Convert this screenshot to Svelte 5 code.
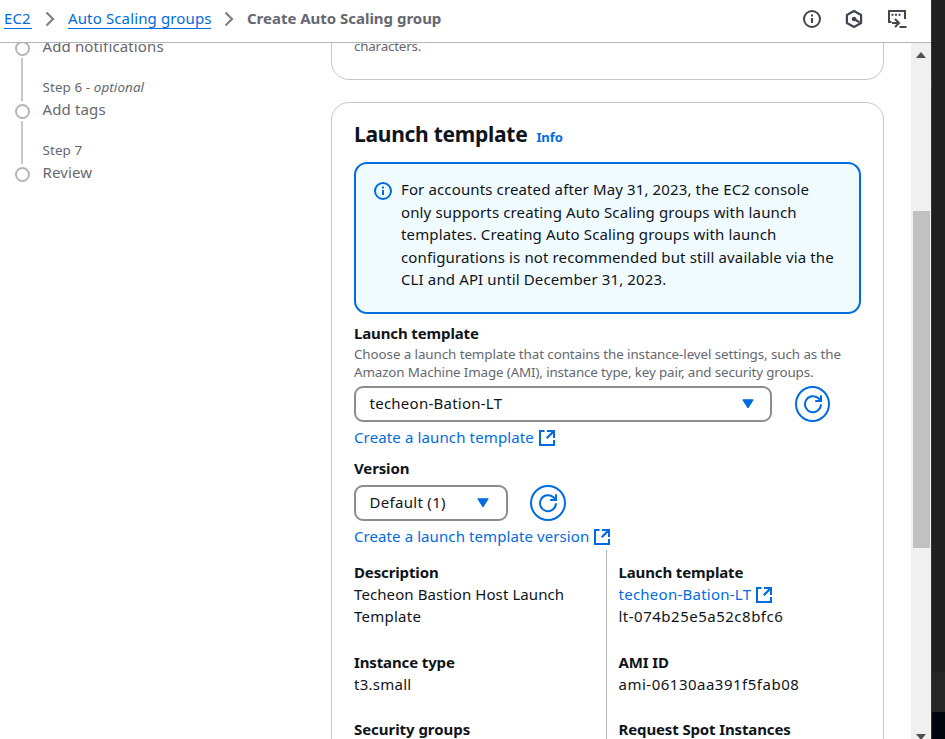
<script>
  const steps = [
    { step: '', optional: false, title: 'Add notifications' },
    { step: 'Step 6', optional: true, title: 'Add tags' },
    { step: 'Step 7', optional: false, title: 'Review' },
  ];
  const notice = [
    'For accounts created after May 31, 2023, the EC2 console',
    'only supports creating Auto Scaling groups with launch',
    'templates. Creating Auto Scaling groups with launch',
    'configurations is not recommended but still available via the',
    'CLI and API until December 31, 2023.',
  ];
</script>

{#snippet chevron()}
  <svg class="chev" width="10" height="16" viewBox="0 0 10 16"><path d="M1.500 1.500 8 8l-6.500 6.500" fill="none" stroke="#7d818b" stroke-width="2.200" /></svg>
{/snippet}

{#snippet external()}
  <svg class="ext" width="16" height="16" viewBox="0 0 16 16" fill="none" stroke="currentColor" stroke-width="2"><path d="M5.500 1H1v14h14v-5M8 1h7v7" /><path d="M14.500 1.500 7.700 8.300" stroke-width="2.300" /></svg>
{/snippet}

{#snippet refresh()}
  <button class="refresh" aria-label="Refresh">
    <svg width="20" height="20" viewBox="0 0 20 20" fill="none" stroke="currentColor" stroke-width="2"><path d="M18 10.300a8 8 0 1 1-2.600-6L17.600 6.300M18 1.300v5.700h-5.800" /></svg>
  </button>
{/snippet}

{#snippet caret()}
  <svg width="12" height="10" viewBox="0 0 12 10"><path d="M.8.8h10.400L6 9z" fill="#006ce0" stroke="#006ce0" stroke-linejoin="round" /></svg>
{/snippet}

<div class="screen">
  <div class="browser">
    <header>
      <nav>
        <a class="ec2" href="#ec2">EC2</a>
        {@render chevron()}
        <a class="groups" href="#groups">Auto Scaling groups</a>
        {@render chevron()}
        <strong>Create Auto Scaling group</strong>
      </nav>
      <div class="tools">
        <svg width="20" height="20" viewBox="0 0 20 20" fill="none" stroke="#424650" stroke-width="2"><circle cx="10" cy="10" r="8" /><path d="M10 9v5M10 5.500v2" /></svg>
        <svg class="hex" width="20" height="20" viewBox="0 0 20 20" fill="none" stroke="#424650" stroke-width="2.200"><path d="m10 2 7.100 4v8L10 18l-7.100-4V6z" stroke-linejoin="round" /><path d="m10 10 5.500 3.300" stroke-width="2.200" /><circle cx="10" cy="10" r="2.300" fill="#424650" stroke="none" /></svg>
        <svg width="20" height="20" viewBox="0 0 20 20" fill="none" stroke="#424650" stroke-width="2"><path d="M4.500 13H2V2h16v8M12.500 18H19.500M5 14h7M8 10l4 4-4 4" /><path d="M4.500 5.700h2m1.500 0h2m1.500 0h2" /></svg>
      </div>
    </header>

    <div class="body">
      <aside>
        {#each steps as s}
          <div class="step">
            <div class="rail"><i></i></div>
            <div class="words">
              <small>{s.step}{#if s.optional}{' '}- <em>optional</em>{/if}</small>
              <p>{s.title}</p>
            </div>
          </div>
        {/each}
      </aside>

      <main>
        <section class="card previous"><p>characters.</p></section>

        <section class="card template">
          <h2>Launch template <a href="#info">Info</a></h2>

          <div class="notice">
            <svg width="18" height="18" viewBox="0 0 18 18" fill="none" stroke="#006ce0" stroke-width="2"><circle cx="9" cy="9" r="8" /><path d="M9 8v5M9 4.500v2" /></svg>
            <div>
              {#each notice as line}<p>{line}</p>{/each}
            </div>
          </div>

          <div class="field">
            <b>Launch template</b>
            <div class="hint">
              <p>Choose a launch template that contains the instance-level settings, such as the</p>
              <p class="second">Amazon Machine Image (AMI), instance type, key pair, and security groups.</p>
            </div>
            <div class="controls">
              <div class="select wide"><span class="name">techeon-Bation-LT</span>{@render caret()}</div>
              {@render refresh()}
            </div>
            <a class="link" href="#create"><span>Create a launch template</span>{@render external()}</a>
          </div>

          <div class="field version">
            <b>Version</b>
            <div class="controls">
              <div class="select"><span class="default">Default (1)</span>{@render caret()}</div>
              {@render refresh()}
            </div>
            <a class="link tight" href="#version"><span>Create a launch template version</span>{@render external()}</a>
          </div>

          <div class="details">
            <div class="col">
              <div class="pair">
                <b>Description</b>
                <p class="tight">Techeon Bastion Host Launch</p>
                <p class="name">Template</p>
              </div>
              <div class="pair"><b>Instance type</b><p class="name">t3.small</p></div>
              <div class="pair"><b class="groups-label">Security groups</b></div>
            </div>
            <div class="col right">
              <div class="pair">
                <b>Launch template</b>
                <a class="link" href="#lt"><span class="name">techeon-Bation-LT</span>{@render external()}</a>
                <p class="id">lt-074b25e5a52c8bfc6</p>
              </div>
              <div class="pair"><b>AMI ID</b><p class="id">ami-06130aa391f5fab08</p></div>
              <div class="pair"><b>Request Spot Instances</b></div>
            </div>
          </div>
        </section>
      </main>

      <div class="scrollbar">
        <svg width="10" height="6" viewBox="0 0 10 6"><path d="M0 6 5 0l5 6z" fill="#505050" /></svg>
        <div class="thumb"></div>
        <svg width="10" height="6" viewBox="0 0 10 6"><path d="M0 0h10L5 6z" fill="#505050" /></svg>
      </div>
    </div>
  </div>
  <div class="edge"><i></i></div>
</div>

<style>
  :global(body) { margin: 0; background: #fff; }
  * { box-sizing: border-box; }
  p, h2 { margin: 0; }
  a { color: #006ce0; text-decoration: none; }
  svg { flex: none; display: block; }
  .screen { display: flex; width: 945px; height: 739px; overflow: hidden; font: 15px/22.500px "Noto Sans", "Open Sans", sans-serif; color: #0f141a; letter-spacing: .13px; white-space: nowrap; }
  .browser { width: 931px; display: flex; flex-direction: column; background: #fff; }
  .edge { flex: 1; border-left: 1px solid #333; background: linear-gradient(#202020 0 672px, #262626 672px 712px, #00060f 712px); padding-top: 79px; }
  .edge i { display: block; width: 1px; height: 8px; background: #51402f; margin-left: -1px; }
  header { height: 43px; flex: none; border-bottom: 1px solid #b4b4bb; display: flex; justify-content: space-between; padding: 0 24px 0 4px; }
  nav { display: flex; align-items: flex-start; padding-top: 7px; color: #656871; }
  nav a { line-height: 22px; height: 22px; border-bottom: 1px solid #006ce0; }
  .ec2 { width: 28px; }
  .groups { width: 143px; }
  nav .chev { margin: 4px 13px 0 13px; }
  nav strong { font-weight: 700; letter-spacing: -.02px; line-height: 22px; }
  .tools { display: flex; gap: 22.500px; margin-top: 9px; }
  .hex { margin: 0 .5px 0 -.5px; }
  .body { flex: 1; min-height: 0; display: flex; overflow: hidden; }
  aside { width: 331px; flex: none; margin-top: -29px; padding-left: 15px; color: #656871; }
  .step { display: flex; height: 63px; }
  .rail { width: 15px; margin-right: 12.500px; display: flex; flex-direction: column; align-items: center; padding-top: 27px; }
  .rail i { width: 15px; height: 15px; flex: none; border: 2px solid #b4b4bb; border-radius: 50%; }
  .rail::after { content: ""; width: 2px; height: 43px; margin: 2px 1px 0 0; flex: none; background: #c6c6cd; }
  .step:last-child .rail::after { display: none; }
  .words small { display: block; font-size: 13.400px; line-height: 18px; height: 21px; padding-top: 1px; letter-spacing: .1px; }
  main { width: 553px; flex: none; }
  .card { border: 1px solid #c6c6cd; border-radius: 18px; padding: 0 22px; }
  .previous { height: 57px; margin-top: -20px; padding-top: 13px; font-size: 13.400px; line-height: 18px; color: #656871; letter-spacing: -.2px; }
  .template { margin-top: 22px; height: 900px; padding-top: 18px; }
  h2 { font-size: 21px; line-height: 27px; height: 41px; display: flex; align-items: baseline; letter-spacing: -.27px; }
  h2 a { font-size: 13px; margin-left: 9px; letter-spacing: -.1px; }
  .notice { height: 152px; width: 507px; border: 2px solid #006ce0; border-radius: 13px; background: #f0fbff; display: flex; gap: 9px; padding: 14px 18px; }
  .notice svg { margin-top: 4px; }
  .field { margin-top: 8px; display: flex; flex-direction: column; }
  b { letter-spacing: -.13px; }
  .field b { height: 23px; }
  .hint { font-size: 13.400px; line-height: 18px; color: #656871; height: 41px; letter-spacing: -.09px; }
  .second { letter-spacing: -.14px; }
  .controls { display: flex; gap: 22px; }
  .select { width: 154px; height: 36px; border: 2px solid #8c8c94; border-radius: 9px; display: flex; align-items: center; justify-content: space-between; padding: 0 17px 1px 13.500px; }
  .wide { width: 418px; padding-right: 16px; }
  .name { letter-spacing: .25px; }
  .default { letter-spacing: .3px; }
  .id { letter-spacing: .5px; }
  .tight { letter-spacing: .09px; }
  .refresh { width: 36px; height: 36px; padding: 0; border: 2px solid #006ce0; border-radius: 50%; background: none; color: #006ce0; display: grid; place-items: center; }
  .wide + .refresh { width: 35px; margin-left: 1px; }
  .link { display: flex; gap: 5px; height: 22.500px; }
  .link svg { margin-top: 4px; }
  .field .link { margin-top: 4px; }
  .version { margin-top: 8.500px; }
  .version b { height: 28px; }
  .details { display: flex; margin-top: 2.500px; }
  .col { width: 252px; padding-top: 10.500px; }
  .right { border-left: 1px solid #b4b4bb; padding-left: 11.500px; height: 300px; }
  .pair { margin-bottom: 23px; }
  .pair b { display: block; height: 22px; }
  .pair .groups-label { letter-spacing: -.05px; }
  .scrollbar { width: 20px; margin-left: auto; flex: none; background: #f0f0f0; display: flex; flex-direction: column; align-items: center; padding-top: 9px; }
  .thumb { width: 17px; height: 337px; margin: 153px 0 186px 1px; flex: none; background: #c1c1c1; }
</style>
